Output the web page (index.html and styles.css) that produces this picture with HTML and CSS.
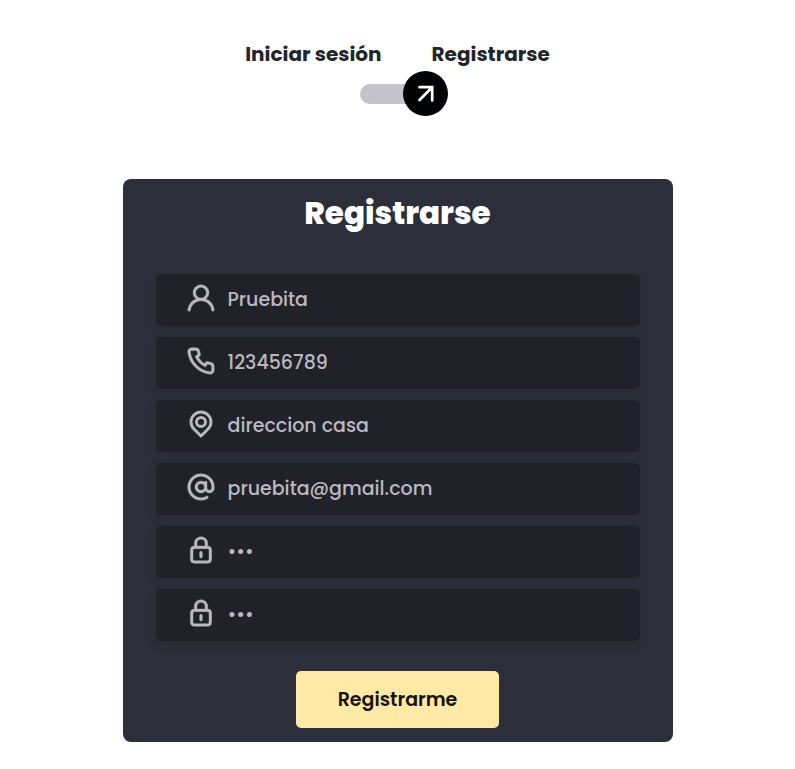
FILE: index.html
```html
<!DOCTYPE html>
<html lang="es">
<head>
<meta charset="utf-8">
<meta name="viewport" content="width=device-width, initial-scale=1">
<title>Registrarse</title>
<link rel="stylesheet" href="styles.css">
</head>
<body>
<main class="page">
  <div class="switcher">
    <div class="modes">
      <label class="mode" for="mode">Iniciar sesión</label>
      <label class="mode" for="mode">Registrarse</label>
    </div>
    <div class="toggle">
      <input class="track" type="checkbox" id="mode" checked>
      <svg class="knob" viewBox="0 0 45 45" aria-hidden="true">
        <circle cx="22.5" cy="22.5" r="22.5" fill="#020305"/>
        <path d="M16.5 16.2H29.2V29.5M29.2 16.2L16.5 29" fill="none" stroke="#fff" stroke-width="2.7" stroke-linecap="round"/>
      </svg>
    </div>
  </div>

  <form class="card">
    <h1 class="title">Registrarse</h1>
    <div class="fields">
      <div class="field">
        <svg class="icon" viewBox="0 0 24 24" aria-hidden="true"><path d="M15.71,12.71a6,6,0,1,0-7.42,0,10,10,0,0,0-6.22,8.18,1,1,0,0,0,2,.22,8,8,0,0,1,15.9,0,1,1,0,0,0,1,.89h.11a1,1,0,0,0,.88-1.1A10,10,0,0,0,15.71,12.71ZM12,12a4,4,0,1,1,4-4A4,4,0,0,1,12,12Z"/></svg>
        <input class="input" type="text" aria-label="Nombre" value="Pruebita">
      </div>
      <div class="field">
        <svg class="icon" viewBox="0 0 24 24" aria-hidden="true"><path d="M19.44,13c-.22,0-.45-.07-.67-.12a9.44,9.44,0,0,1-1.31-.39,2,2,0,0,0-2.48,1l-.22.45a12.18,12.18,0,0,1-2.66-2,12.18,12.18,0,0,1-2-2.66L10.52,9a2,2,0,0,0,1-2.48,10.33,10.33,0,0,1-.39-1.31c-.05-.22-.09-.45-.12-.68a3,3,0,0,0-3-2.49h-3a3,3,0,0,0-3,3.41A19,19,0,0,0,18.53,21.91l.38,0a3,3,0,0,0,2-.76,3,3,0,0,0,1-2.25v-3A3,3,0,0,0,19.44,13Zm.5,6a1,1,0,0,1-.34.75,1.05,1.05,0,0,1-.82.25A17,17,0,0,1,4.07,5.22a1.09,1.09,0,0,1,.25-.82,1,1,0,0,1,.75-.34h3a1,1,0,0,1,1,.79q.06.41.15.81a11.12,11.12,0,0,0,.46,1.55l-1.4.65a1,1,0,0,0-.49,1.33,14.49,14.49,0,0,0,7,7,1,1,0,0,0,.76,0,1,1,0,0,0,.57-.52l.62-1.4a13.69,13.69,0,0,0,1.58.46q.4.09.81.15a1,1,0,0,1,.79,1Z"/></svg>
        <input class="input" type="tel" aria-label="Teléfono" value="123456789">
      </div>
      <div class="field">
        <svg class="icon icon-line" viewBox="0 0 24 24" aria-hidden="true"><path d="M6.7 15.8L12 21L17.3 15.8A7.5 7.5 0 1 0 6.7 15.8Z"/><circle cx="12" cy="10.5" r="3.4"/></svg>
        <input class="input" type="text" aria-label="Dirección" value="direccion casa">
      </div>
      <div class="field">
        <svg class="icon" viewBox="0 0 24 24" aria-hidden="true"><path d="M12,2a10,10,0,1,0,5,18.66,1,1,0,1,0-1-1.73A8,8,0,1,1,20,12v.75a1.75,1.75,0,0,1-3.5,0V8.5a1,1,0,0,0-1-1,1,1,0,0,0-1,.79A4.45,4.45,0,0,0,12,7.5,4.5,4.5,0,1,0,15.3,15,3.74,3.74,0,0,0,22,12.75V12A10,10,0,0,0,12,2Zm0,12.5A2.5,2.5,0,1,1,14.5,12,2.5,2.5,0,0,1,12,14.5Z"/></svg>
        <input class="input" type="email" aria-label="Correo electrónico" value="pruebita@gmail.com">
      </div>
      <div class="field">
        <svg class="icon" viewBox="0 0 24 24" aria-hidden="true"><path d="M12,13a1,1,0,0,0-1,1v3a1,1,0,0,0,2,0V14A1,1,0,0,0,12,13Zm5-4V7A5,5,0,0,0,7,7V9a3,3,0,0,0-3,3v7a3,3,0,0,0,3,3H17a3,3,0,0,0,3-3V12A3,3,0,0,0,17,9ZM9,7a3,3,0,0,1,6,0V9H9Zm9,12a1,1,0,0,1-1,1H7a1,1,0,0,1-1-1V12a1,1,0,0,1,1-1H17a1,1,0,0,1,1,1Z"/></svg>
        <input class="input" type="password" aria-label="Contraseña" value="123">
      </div>
      <div class="field">
        <svg class="icon" viewBox="0 0 24 24" aria-hidden="true"><path d="M12,13a1,1,0,0,0-1,1v3a1,1,0,0,0,2,0V14A1,1,0,0,0,12,13Zm5-4V7A5,5,0,0,0,7,7V9a3,3,0,0,0-3,3v7a3,3,0,0,0,3,3H17a3,3,0,0,0,3-3V12A3,3,0,0,0,17,9ZM9,7a3,3,0,0,1,6,0V9H9Zm9,12a1,1,0,0,1-1,1H7a1,1,0,0,1-1-1V12a1,1,0,0,1,1-1H17a1,1,0,0,1,1,1Z"/></svg>
        <input class="input" type="password" aria-label="Repetir contraseña" value="123">
      </div>
    </div>
    <button class="submit" type="button">Registrarme</button>
  </form>
</main>
</body>
</html>
```
FILE: styles.css
```css
* {
  box-sizing: border-box;
}

body {
  margin: 0;
  background: #fff;
  color: #212529;
  font-family: Poppins, Inter, sans-serif;
}

.page {
  display: flex;
  flex-direction: column;
  align-items: center;
  padding: 39px 20px 27px;
}

.switcher {
  display: flex;
  flex-direction: column;
  align-items: center;
  margin-bottom: 63px;
}

.modes {
  display: flex;
  gap: 50px;
  padding-bottom: 2px;
}

.mode {
  font-size: 20px;
  font-weight: 700;
  line-height: 30px;
}

.toggle {
  position: relative;
  display: flex;
  align-items: center;
  width: 75px;
  height: 45px;
}

.track {
  appearance: none;
  width: 100%;
  height: 20px;
  margin: 0;
  border-radius: 10px;
  background: #c4c3ca;
}

.knob {
  position: absolute;
  top: 0;
  left: 43px;
  width: 45px;
  height: 45px;
  pointer-events: none;
}

.card {
  display: flex;
  flex-direction: column;
  align-items: center;
  width: 100%;
  max-width: 550px;
  padding: 10px 33px 14px;
  border-radius: 8px;
  background: #2c2e39;
}

.title {
  margin: 0 0 37px;
  color: #fff;
  font-size: 31px;
  font-weight: 800;
  line-height: 48px;
}

.fields {
  display: grid;
  gap: 11px;
  width: 100%;
  margin-bottom: 30px;
}

.field {
  display: flex;
  align-items: center;
  height: 52px;
  padding-left: 29px;
  border-radius: 5px;
  background: #21212a;
  box-shadow: 0 4px 8px rgba(33, 37, 41, 0.2);
}

.icon {
  flex: none;
  width: 32px;
  height: 32px;
  margin-bottom: 4px;
  fill: #bab9c0;
  stroke: #bab9c0;
  stroke-width: 0.3;
}

.icon-line {
  fill: none;
  stroke-width: 2.2;
  stroke-linejoin: round;
}

.input {
  flex: 1;
  min-width: 0;
  height: 100%;
  padding: 0 20px 1px 11px;
  border: 0;
  outline: 0;
  background: transparent;
  color: #bab9c0;
  font-family: inherit;
  font-size: 19px;
  font-weight: 500;
}

.submit {
  height: 57px;
  padding: 0 42px;
  border: 0;
  border-radius: 5px;
  background: #ffe9a6;
  color: #15140f;
  font-family: inherit;
  font-size: 19px;
  font-weight: 600;
}
```
